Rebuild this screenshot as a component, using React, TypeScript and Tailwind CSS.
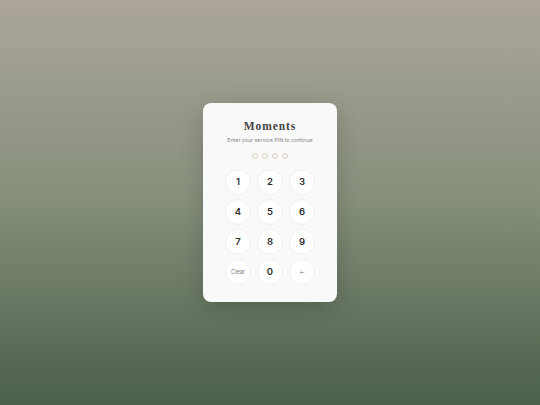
const KEYS = ["1", "2", "3", "4", "5", "6", "7", "8", "9"];

const Key = ({ label, small }: { label: string; small?: boolean }) => (
  <button
    className={`flex h-[26px] w-[26px] items-center justify-center rounded-full border border-[#efefef] bg-white ${
      small ? "text-[5.5px] text-[#777]" : "text-[9.5px] font-semibold text-[#2f2f2f]"
    }`}
  >
    {label}
  </button>
);

export default function App() {
  return (
    <div
      className="flex h-[405px] w-[540px] items-center justify-center bg-gradient-to-b from-[#aca59c] via-[#858f7b] to-[#4b5f4a]"
      style={{ fontFamily: "Inter, 'Noto Sans', sans-serif" }}
    >
      <div className="flex w-[134px] flex-col items-center rounded-[8px] bg-[#f9f9f9] px-[22px] pt-[16px] pb-[17px] shadow-[0_6px_24px_rgba(0,0,0,0.18)]">
        <h1
          className="text-[11.5px] leading-[14px] font-bold tracking-[0.08em] text-[#444]"
          style={{ fontFamily: "'Liberation Serif', 'DejaVu Serif', serif" }}
        >
          Moments
        </h1>
        <p className="mt-[4px] text-[5.3px] leading-[7px] whitespace-nowrap text-[#888]">
          Enter your service PIN to continue
        </p>
        <div className="mt-[9px] flex gap-[4px]">
          {[0, 1, 2, 3].map((i) => (
            <span key={i} className="block h-[6px] w-[6px] rounded-full border border-[#d9cfc2]" />
          ))}
        </div>
        <div className="mt-[10px] grid grid-cols-3 gap-x-[6px] gap-y-[4px]">
          {KEYS.map((k) => (
            <Key key={k} label={k} />
          ))}
          <Key label="Clear" small />
          <Key label="0" />
          <Key label="←" small />
        </div>
      </div>
    </div>
  );
}
